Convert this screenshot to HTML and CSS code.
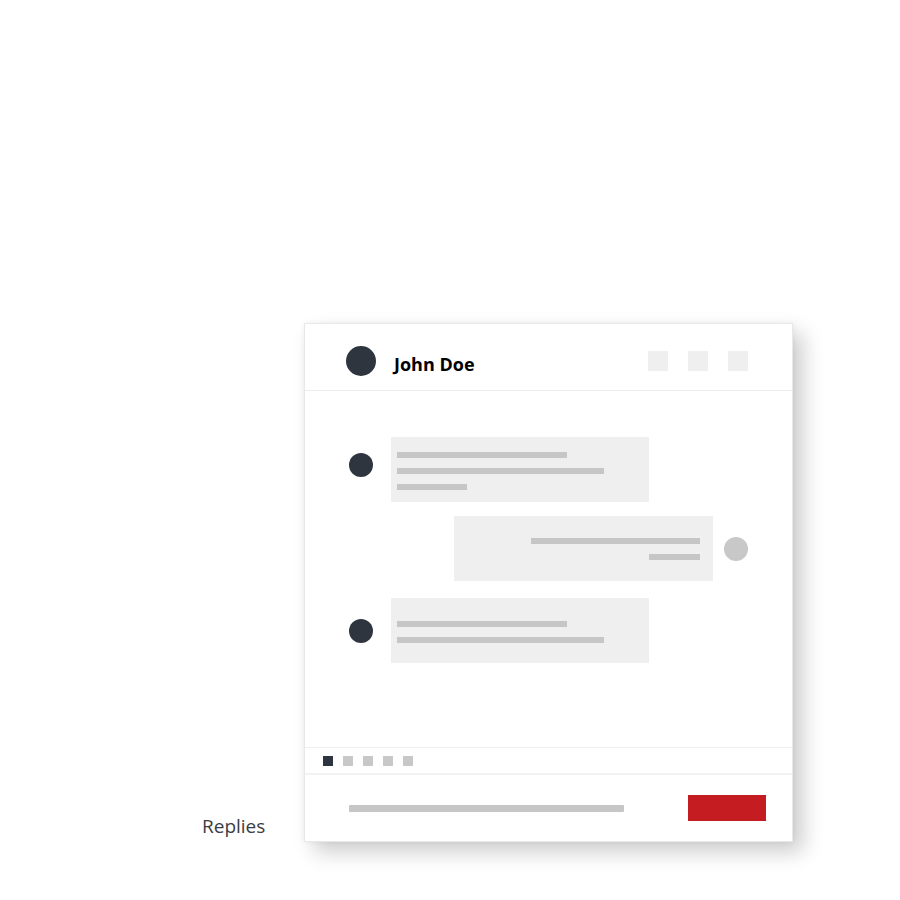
FILE: index.html
```html
<!DOCTYPE html>
<html lang="en">
<head>
<meta charset="utf-8">
<title>Replies</title>
<link rel="stylesheet" href="styles.css">
</head>
<body>
<div class="stage">
  <div class="label">Replies</div>
  <div class="card">
    <div class="header">
      <div class="avatar-lg"></div>
      <div class="name">John Doe</div>
      <div class="actions">
        <span class="action"></span>
        <span class="action"></span>
        <span class="action"></span>
      </div>
    </div>
    <div class="messages">
      <div class="msg msg--top">
        <div class="avatar dark"></div>
        <div class="bubble">
          <span class="line" style="width:170px"></span>
          <span class="line" style="width:207px"></span>
          <span class="line" style="width:70px"></span>
        </div>
      </div>
      <div class="msg mine">
        <div class="bubble bubble--mine">
          <span class="line" style="width:169px"></span>
          <span class="line" style="width:51px"></span>
        </div>
        <div class="avatar light"></div>
      </div>
      <div class="msg msg--last">
        <div class="avatar dark"></div>
        <div class="bubble">
          <span class="line" style="width:170px"></span>
          <span class="line" style="width:207px"></span>
        </div>
      </div>
    </div>
    <div class="pager">
      <span class="dot active"></span>
      <span class="dot"></span>
      <span class="dot"></span>
      <span class="dot"></span>
      <span class="dot"></span>
    </div>
    <div class="footer">
      <div class="input"></div>
      <div class="send"></div>
    </div>
  </div>
</div>
</body>
</html>
```

FILE: styles.css
```css
html, body {
  margin: 0;
  padding: 0;
  background: #ffffff;
  font-family: "Open Sans", "Noto Sans", sans-serif;
}

body {
  min-height: 100vh;
}

.stage {
  display: flex;
  align-items: flex-end;
  padding: 323px 0 58px 202px;
}

.label {
  width: 102px;
  font-size: 19px;
  line-height: 28px;
  color: #3a3d42;
  margin-bottom: 2px;
}

.card {
  width: 487px;
  height: 517px;
  border: 1px solid #e8e8e8;
  background: #fff;
  display: flex;
  flex-direction: column;
  box-shadow: 0 0 6px rgba(0, 0, 0, 0.05), 10px 10px 20px rgba(0, 0, 0, 0.2);
}

.header {
  display: flex;
  align-items: center;
  padding: 22px 44px 14px 41px;
  border-bottom: 1px solid #ececec;
}

.avatar-lg {
  width: 30px;
  height: 30px;
  border-radius: 50%;
  background: #2e353f;
}

.name {
  margin-left: 18px;
  margin-top: 5px;
  font-size: 18px;
  font-weight: 700;
  color: #000;
}

.actions {
  margin-left: auto;
  display: flex;
  gap: 20px;
}

.action {
  width: 20px;
  height: 20px;
  background: #efefef;
}

.messages {
  flex: 1;
  display: flex;
  flex-direction: column;
  padding: 46px 44px 0 44px;
}

.msg {
  display: flex;
  align-items: center;
}

.msg + .msg {
  margin-top: 14px;
}

.msg.msg--last {
  margin-top: 17px;
}

.msg--top .avatar {
  margin-top: -10px;
}

.msg.mine {
  justify-content: flex-end;
}

.avatar {
  width: 24px;
  height: 24px;
  border-radius: 50%;
  flex: none;
}

.avatar.dark {
  background: #2e353f;
  margin-right: 18px;
}

.avatar.light {
  background: #c8c8c8;
  margin-left: 11px;
}

.bubble {
  width: 258px;
  height: 65px;
  box-sizing: border-box;
  background: #efefef;
  display: flex;
  flex-direction: column;
  justify-content: center;
  align-items: flex-start;
  gap: 10px;
  padding: 2px 6px 0 6px;
}

.bubble--mine {
  width: 259px;
  align-items: flex-end;
  padding: 0 13px 0 0;
}

.line {
  display: block;
  height: 6px;
  background: #c6c6c6;
}

.pager {
  display: flex;
  gap: 10px;
  padding: 8px 0 7px 18px;
  border-top: 1px solid #eeeeee;
  border-bottom: 2px solid #f2f2f2;
}

.dot {
  width: 10px;
  height: 10px;
  background: #c8c8c8;
}

.dot.active {
  background: #2d3440;
}

.footer {
  height: 66px;
  display: flex;
  align-items: center;
  padding: 0 26px 0 44px;
}

.input {
  width: 275px;
  height: 7px;
  background: #c6c6c6;
  border-radius: 1px;
}

.send {
  width: 78px;
  height: 26px;
  margin-left: auto;
  background: #c41c20;
}
```
